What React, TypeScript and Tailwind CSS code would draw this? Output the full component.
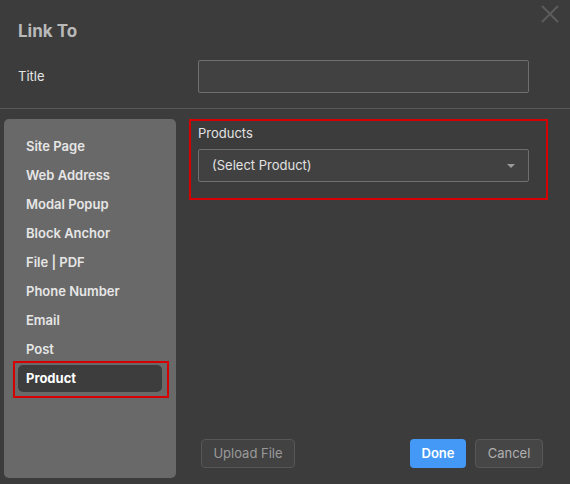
import React from 'react';

const linkTypes = [
    'Site Page',
    'Web Address',
    'Modal Popup',
    'Block Anchor',
    'File | PDF',
    'Phone Number',
    'Email',
    'Post',
    'Product',
];

const App: React.FC = () => {
    const active = 'Product';

    return (
        <div
            className="relative w-[570px] h-[484px] overflow-hidden bg-[#3c3c3c] flex flex-col"
            style={{ fontFamily: 'Inter, "Noto Sans", sans-serif' }}
        >
            {/* close */}
            <button className="absolute top-[5px] right-[11px] w-[18px] h-[18px]" aria-label="Close">
                <svg viewBox="0 0 18 18" className="w-[18px] h-[18px]" fill="none" stroke="#5c5c5c" strokeWidth="2">
                    <path d="M1 1L17 17M17 1L1 17" />
                </svg>
            </button>

            <h1 className="pt-[19px] pl-[18px] text-[17px] leading-[24px] font-bold text-[#b9b9b9]">Link To</h1>

            <div className="mt-[17px] flex items-center pl-[18px]">
                <label className="w-[180px] text-[13px] text-[#e4e4e4]">Title</label>
                <input
                    type="text"
                    className="w-[331px] h-[33px] bg-[#414141] border border-[#6f6f6f] rounded-[2px] focus:outline-none"
                />
            </div>

            <div className="mt-[15px] h-px bg-[#575757]" />

            <div className="flex pt-[10px] pl-[4px]">
                <div className="w-[172px] h-[359px] rounded-[5px] bg-[#696969] pt-[14px] px-[14px] flex flex-col gap-[2px]">
                    {linkTypes.map(t => (
                        <div
                            key={t}
                            className={
                                t === active
                                    ? 'relative h-[27px] flex items-center px-[8px] rounded-[5px] bg-[#3d3d3d] text-white text-[13px] font-bold'
                                    : 'h-[27px] flex items-center px-[8px] text-[#e6e6e6] text-[13px] font-semibold'
                            }
                        >
                            {t}
                            {t === active && (
                                <span className="absolute -top-[4px] -bottom-[6px] -left-[5px] -right-[7px] border-2 border-[#d70000] pointer-events-none" />
                            )}
                        </div>
                    ))}
                </div>

                <div className="ml-[13px] w-[359px] h-[359px] flex flex-col">
                    <div className="h-[81px] border-2 border-[#d70000] pl-[7px] pt-[4px]">
                        <div className="text-[13px] leading-[16px] text-[#e2e2e2]">Products</div>
                        <div className="mt-[8px] w-[331px] h-[33px] bg-[#414141] border border-[#6f6f6f] rounded-[2px] flex items-center justify-between pl-[13px] pr-[13px]">
                            <span className="text-[13px] text-[#e2e2e2]">(Select Product)</span>
                            <svg viewBox="0 0 8 4" className="w-[8px] h-[4px]" fill="#9a9a9a">
                                <path d="M0 0H8L4 4Z" />
                            </svg>
                        </div>
                    </div>

                    <div className="mt-auto mb-[10px] flex items-center justify-between">
                        <button className="ml-[12px] w-[94px] h-[29px] rounded-[4px] border border-[#575757] bg-[#424242] text-[13px] text-[#9a9a9a]">
                            Upload File
                        </button>
                        <div className="flex gap-[9px] mr-[5px]">
                            <button className="w-[56px] h-[29px] rounded-[4px] bg-[#4499f7] text-[13px] font-semibold text-white">
                                Done
                            </button>
                            <button className="w-[68px] h-[29px] rounded-[4px] border border-[#575757] bg-[#464646] text-[13px] text-[#b0b0b0]">
                                Cancel
                            </button>
                        </div>
                    </div>
                </div>
            </div>
        </div>
    );
};

export default App;
